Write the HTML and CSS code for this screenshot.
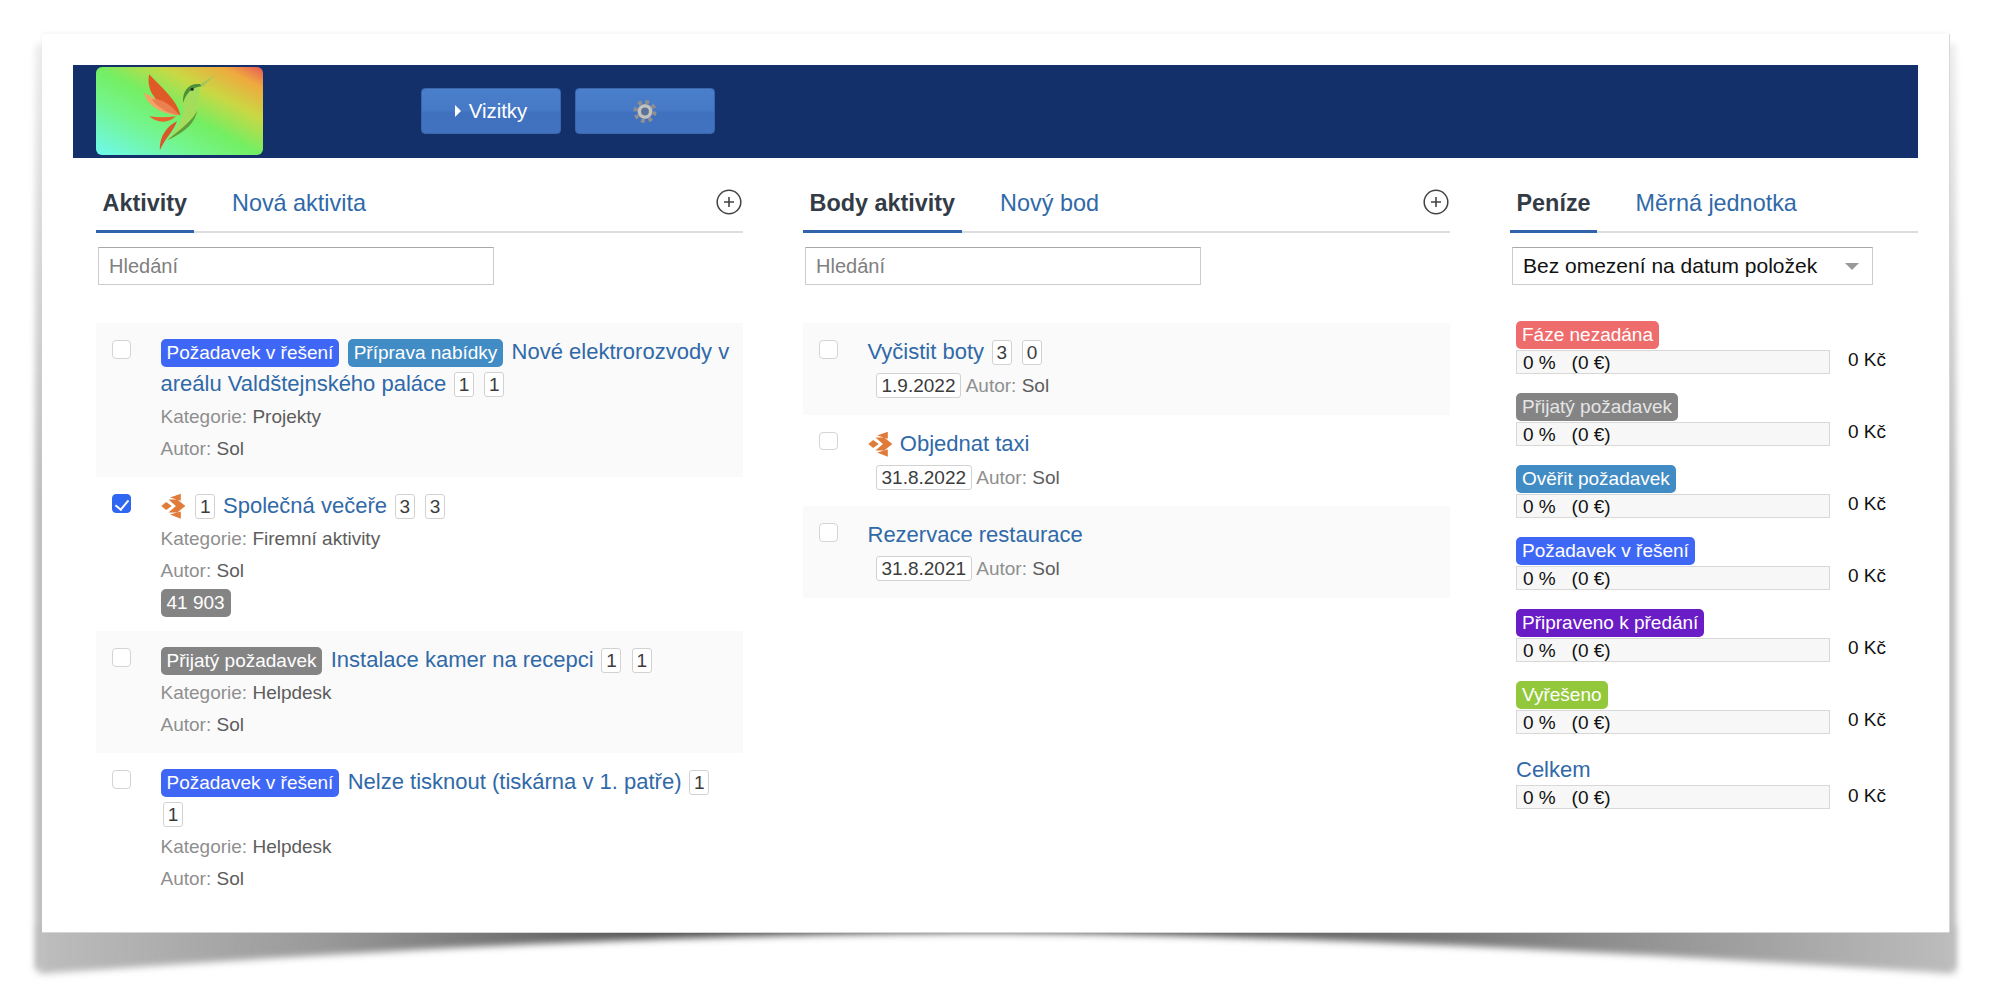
FILE: index.html
```html
<!DOCTYPE html>
<html lang="cs">
<head>
<meta charset="utf-8">
<title>Aktivity</title>
<link rel="stylesheet" href="styles.css">
</head>
<body>
<svg class="shadow" width="1994" height="996" viewBox="0 0 1994 996" aria-hidden="true">
  <defs>
    <linearGradient id="sb" x1="38" x2="1958" y1="0" y2="0" gradientUnits="userSpaceOnUse">
      <stop offset="0" stop-color="#bdbdbd"/>
      <stop offset=".15" stop-color="#999"/>
      <stop offset=".32" stop-color="#555"/>
      <stop offset=".6" stop-color="#555"/>
      <stop offset=".8" stop-color="#8a8a8a"/>
      <stop offset="1" stop-color="#bdbdbd"/>
    </linearGradient>
    <linearGradient id="ss" x1="0" x2="0" y1="34" y2="500" gradientUnits="userSpaceOnUse">
      <stop offset="0" stop-color="#eee"/>
      <stop offset="1" stop-color="#bbb"/>
    </linearGradient>
    <filter id="bl" x="-5%" y="-30%" width="110%" height="160%"><feGaussianBlur stdDeviation="4 3.5"/></filter>
    <filter id="bs" x="-100%" y="-5%" width="300%" height="110%"><feGaussianBlur stdDeviation="3"/></filter>
  </defs>
  <rect x="35" y="44" width="10" height="925" fill="url(#ss)" filter="url(#bs)"/>
  <rect x="1946" y="44" width="10" height="925" fill="url(#ss)" filter="url(#bs)"/>
  <path d="M39 925 L39 974 C 500 940 800 933 1000 933 C 1250 934 1600 950 1954 974 L1954 925 Z" fill="url(#sb)" filter="url(#bl)"/>
</svg>

<div class="window">
  <header class="topbar">
    <div class="logo">
      <svg viewBox="20 20 498 264" width="167" height="88" aria-hidden="true">
        <path d="M162 97C172 132 205 158 262 165C232 140 192 108 162 97Z" fill="#f2a468"/>
        <path d="M178 42C170 80 185 130 272 165C262 120 218 85 178 42Z" fill="#e05a28"/>
        <path d="M186 118C208 146 240 160 268 165C245 135 215 112 186 118Z" fill="#ea8050"/>
        <path d="M178 168C200 187 235 192 258 168C230 172 205 172 178 168Z" fill="#e8632e"/>
        <path d="M210 270C208 225 235 195 262 182C248 218 225 235 210 270Z" fill="#d9582a"/>
        <path d="M232 240C285 218 322 180 322 140C324 110 328 90 334 76C300 72 278 100 282 140C280 170 272 195 232 240Z" fill="#a4dc5c"/>
        <path d="M232 240C285 218 318 185 322 150C310 180 275 205 232 240Z" fill="#5f9e3c"/>
        <path d="M334 72C300 66 276 90 280 128C288 100 305 82 334 78Z" fill="#4c8f38"/>
        <path d="M330 72L376 44L338 80Z" fill="#a7c65a"/>
        <circle cx="307" cy="87" r="4.5" fill="#1d2a1d"/>
      </svg>
    </div>
    <nav class="topnav">
      <a class="navbtn"><span class="caret"></span>Vizitky</a>
      <a class="navbtn" aria-label="Nastavení">
        <svg width="24" height="25" viewBox="0 0 24 24" aria-hidden="true">
          <circle cx="12" cy="12" r="9.6" fill="none" stroke="#8f8f8f" stroke-width="4" stroke-dasharray="3.9 3.64"/>
          <circle cx="12" cy="12" r="7.6" fill="#8a8a8a"/>
          <circle cx="12" cy="12" r="5.6" fill="none" stroke="#c2c2c2" stroke-width="3.4"/>
          <circle cx="12" cy="12" r="3.7" fill="#5b7399"/>
        </svg>
      </a>
    </nav>
  </header>

  <main class="columns">
    <section class="col">
      <div class="tabs">
        <a class="tab active">Aktivity</a>
        <a class="tab">Nová aktivita</a>
        <svg class="plus" width="26" height="26" viewBox="0 0 26 26" aria-hidden="true"><circle cx="13" cy="13" r="11.8" fill="none" stroke="#444" stroke-width="1.5"/><path d="M13 8v10M8 13h10" stroke="#444" stroke-width="1.6"/></svg>
      </div>
      <input class="search" type="text" placeholder="Hledání">
      <ul class="list">
        <li class="row shaded">
          <input class="check" type="checkbox">
          <div class="body">
            <div class="line"><span class="label blue">Požadavek v řešení</span> <span class="label sky">Příprava nabídky</span> <a class="title">Nové elektrorozvody v areálu Valdštejnského paláce</a> <span class="num">1</span> <span class="num">1</span></div>
            <div class="line meta">Kategorie: <b>Projekty</b></div>
            <div class="line meta">Autor: <b>Sol</b></div>
          </div>
        </li>
        <li class="row">
          <input class="check" type="checkbox" checked>
          <div class="body">
            <div class="line"><svg class="mark" viewBox="183 48 75 80" width="25" height="26" aria-hidden="true"><path d="M210 62L243 50V72ZM205 68H232L257 88L232 108H205L228 88ZM183 88L198 76L215 88L198 100ZM210 114L243 105V127Z" fill="#e07b39"/></svg> <span class="num">1</span> <a class="title">Společná večeře</a> <span class="num">3</span> <span class="num">3</span></div>
            <div class="line meta">Kategorie: <b>Firemní aktivity</b></div>
            <div class="line meta">Autor: <b>Sol</b></div>
            <div class="line"><span class="label gray">41 903</span></div>
          </div>
        </li>
        <li class="row shaded">
          <input class="check" type="checkbox">
          <div class="body">
            <div class="line"><span class="label gray">Přijatý požadavek</span> <a class="title">Instalace kamer na recepci</a> <span class="num">1</span> <span class="num">1</span></div>
            <div class="line meta">Kategorie: <b>Helpdesk</b></div>
            <div class="line meta">Autor: <b>Sol</b></div>
          </div>
        </li>
        <li class="row">
          <input class="check" type="checkbox">
          <div class="body">
            <div class="line"><span class="label blue">Požadavek v řešení</span> <a class="title">Nelze tisknout (tiskárna v 1. patře)</a> <span class="num">1</span> <span class="num">1</span></div>
            <div class="line meta">Kategorie: <b>Helpdesk</b></div>
            <div class="line meta">Autor: <b>Sol</b></div>
          </div>
        </li>
      </ul>
    </section>

    <section class="col">
      <div class="tabs">
        <a class="tab active">Body aktivity</a>
        <a class="tab">Nový bod</a>
        <svg class="plus" width="26" height="26" viewBox="0 0 26 26" aria-hidden="true"><circle cx="13" cy="13" r="11.8" fill="none" stroke="#444" stroke-width="1.5"/><path d="M13 8v10M8 13h10" stroke="#444" stroke-width="1.6"/></svg>
      </div>
      <input class="search" type="text" placeholder="Hledání">
      <ul class="list">
        <li class="row shaded point">
          <input class="check" type="checkbox">
          <div class="body">
            <div class="pline"><a class="title">Vyčistit boty</a> <span class="num">3</span> <span class="num">0</span></div>
            <div class="pline meta indent"><span class="num date">1.9.2022</span> Autor: <b>Sol</b></div>
          </div>
        </li>
        <li class="row point">
          <input class="check" type="checkbox">
          <div class="body">
            <div class="pline"><svg class="mark" viewBox="183 48 75 80" width="25" height="26" aria-hidden="true"><path d="M210 62L243 50V72ZM205 68H232L257 88L232 108H205L228 88ZM183 88L198 76L215 88L198 100ZM210 114L243 105V127Z" fill="#e07b39"/></svg> <a class="title">Objednat taxi</a></div>
            <div class="pline meta indent"><span class="num date">31.8.2022</span> Autor: <b>Sol</b></div>
          </div>
        </li>
        <li class="row shaded point">
          <input class="check" type="checkbox">
          <div class="body">
            <div class="pline"><a class="title">Rezervace restaurace</a></div>
            <div class="pline meta indent"><span class="num date">31.8.2021</span> Autor: <b>Sol</b></div>
          </div>
        </li>
      </ul>
    </section>

    <section class="col">
      <div class="tabs">
        <a class="tab active">Peníze</a>
        <a class="tab">Měrná jednotka</a>
      </div>
      <div class="select">Bez omezení na datum položek<span class="arrow"></span></div>
      <div class="money">
        <div class="stat"><span class="label red">Fáze nezadána</span><div class="statbar"><div class="bar">0 %&nbsp;&nbsp; (0 €)</div><span class="sum">0 Kč</span></div></div>
        <div class="stat"><span class="label gray dim">Přijatý požadavek</span><div class="statbar"><div class="bar">0 %&nbsp;&nbsp; (0 €)</div><span class="sum">0 Kč</span></div></div>
        <div class="stat"><span class="label sky">Ověřit požadavek</span><div class="statbar"><div class="bar">0 %&nbsp;&nbsp; (0 €)</div><span class="sum">0 Kč</span></div></div>
        <div class="stat"><span class="label blue">Požadavek v řešení</span><div class="statbar"><div class="bar">0 %&nbsp;&nbsp; (0 €)</div><span class="sum">0 Kč</span></div></div>
        <div class="stat"><span class="label purple">Připraveno k předání</span><div class="statbar"><div class="bar">0 %&nbsp;&nbsp; (0 €)</div><span class="sum">0 Kč</span></div></div>
        <div class="stat"><span class="label green">Vyřešeno</span><div class="statbar"><div class="bar">0 %&nbsp;&nbsp; (0 €)</div><span class="sum">0 Kč</span></div></div>
        <div class="stat total"><a class="title">Celkem</a><div class="statbar"><div class="bar">0 %&nbsp;&nbsp; (0 €)</div><span class="sum">0 Kč</span></div></div>
      </div>
    </section>
  </main>
</div>
</body>
</html>
```
FILE: styles.css
```css
* { box-sizing: border-box; }
html, body { margin: 0; height: 996px; overflow: hidden; background: #fff; }
body {
  padding: 34px 45px 64px 42px;
  font-family: "Liberation Sans", Arial, sans-serif;
  color: #333;
}
.shadow { position: absolute; left: 0; top: 0; }
.window {
  position: relative;
  height: 898px;
  padding: 31px 31px 0;
  background: #fff;
  box-shadow: 0 -1px 4px rgba(0,0,0,.05), 0 1px 0 #d8d8d8, 1px 0 0 #ddd;
}
.topbar {
  display: flex;
  align-items: flex-start;
  height: 93px;
  padding: 2px 0 0 23px;
  background: #14306a;
}
.logo {
  width: 167px;
  height: 88px;
  border-radius: 6px;
  overflow: hidden;
  background: linear-gradient(to top right, #6ef9ee 0%, #74f58a 32%, #74ee62 50%, #c9d844 70%, #efa93e 88%, #e8585a 100%);
}
.logo svg { display: block; }
.topnav { display: flex; gap: 14px; margin: 21px 0 0 158px; }
.navbtn {
  display: flex;
  align-items: center;
  justify-content: center;
  width: 140px;
  height: 46px;
  border: 1px solid #3a66ab;
  border-radius: 4px;
  background: linear-gradient(#4a7fcb 0, #4679c6 50%, #3f71be 52%, #4072c0 100%);
  color: #fff;
  font-size: 20.4px;
}
.caret {
  width: 0; height: 0;
  margin-right: 8px;
  border-left: 6px solid #fff;
  border-top: 6px solid transparent;
  border-bottom: 6px solid transparent;
}
.columns {
  display: grid;
  grid-template-columns: 647px 647px 408px;
  column-gap: 60px;
  padding-left: 23px;
}
.col { min-width: 0; }
.tabs {
  display: flex;
  align-items: flex-start;
  gap: 32px;
  height: 75px;
  padding-top: 28px;
  border-bottom: 2px solid #ddd;
}
.tab {
  height: 47px;
  line-height: 34px;
  padding: 0 6.5px;
  font-size: 23.4px;
  color: #3069a8;
}
.tab.active {
  border-bottom: 3px solid #2f63aa;
  font-weight: bold;
  color: #333c46;
}
.plus { margin: 3px 1px 0 auto; }
.search {
  display: block;
  width: 396px;
  height: 38px;
  margin: 14px 0 0 2px;
  padding: 0 10px;
  border: 1px solid #ccc;
  border-top-color: #aaa;
  border-radius: 0;
  font: 20px "Liberation Sans", Arial, sans-serif;
  outline: 0;
}
.search::placeholder { color: #808080; opacity: 1; }
.list { list-style: none; margin: 38px 0 0; padding: 0; }
.row {
  display: flex;
  gap: 30px;
  padding: 14px 8px 12px 16px;
}
.row.shaded { background: #fafafa; }
.check {
  flex: none;
  position: relative;
  appearance: none;
  width: 18.5px;
  height: 18.5px;
  margin: 3px 0 0;
  border: 1px solid #d4d4d4;
  border-radius: 4px;
  background: #fff;
}
.check:checked {
  border-color: #2f66f2;
  background: #2f66f2;
}
.check:checked::after {
  content: "";
  position: absolute;
  left: 5px;
  top: 1.5px;
  width: 6px;
  height: 11px;
  border: solid #fff;
  border-width: 0 2.4px 2.4px 0;
  transform: rotate(40deg);
}
.body { flex: 1; min-width: 0; }
.line {
  line-height: 32px;
  font-size: 19px;
}
.title { font-size: 22px; line-height: 1; color: #3069a8; }
.label {
  display: inline-block;
  height: 27.5px;
  line-height: 27px;
  margin-right: 3px;
  padding: 0 6px;
  border-radius: 5px;
  font-size: 19px;
  color: #fff;
}
.blue { background: #3f67f5; }
.sky { background: #428cc6; }
.gray { background: #848484; }
.dim { color: #e4e4e4; }
.red { background: #ef6c6c; }
.purple { background: #6a1cc6; }
.green { background: #93c83c; }
.num {
  display: inline-block;
  min-width: 20px;
  height: 25px;
  margin: 0 2.5px;
  padding: 0 3px;
  line-height: 23px;
  border: 1px solid #d2d2d2;
  border-radius: 3px;
  background: #fff;
  text-align: center;
  font-size: 19px;
  color: #3c3c3c;
}
.mark { margin-right: 2px; vertical-align: -6px; }
.meta { color: #8f8f8f; }
.meta b { font-weight: normal; color: #5c5c5c; }
.row.point { padding: 13px 8px 12.5px 16px; }
.point .check { margin-top: 4px; }
.pline { height: 33px; line-height: 33px; font-size: 19px; }
.indent { padding-left: 8px; }
.num.date { margin: 0; padding: 0 5px; }
.select {
  display: flex;
  align-items: center;
  justify-content: space-between;
  width: 361px;
  height: 38px;
  margin: 14px 0 0 2px;
  padding: 0 13px 0 10px;
  border: 1px solid #ccc;
  border-top-color: #aaa;
  font-size: 21px;
  color: #111;
}
.arrow {
  width: 0; height: 0;
  border-top: 7px solid #999;
  border-left: 7px solid transparent;
  border-right: 7px solid transparent;
}
.money { margin: 36px 0 0 6px; }
.stat { height: 72px; }
.stat .label { display: table; margin: 0; }
.statbar { display: flex; align-items: center; gap: 18px; margin-top: 1px; }
.bar {
  flex: none;
  width: 314px;
  height: 24px;
  padding-left: 6px;
  line-height: 24px;
  border: 1px solid #d8d8d8;
  background: #f7f7f7;
  font-size: 19px;
  color: #111;
}
.sum { font-size: 19px; color: #111; margin-top: -3px; white-space: nowrap; }
.total { padding-top: 1px; }
.total .title { display: block; height: 32px; line-height: 32px; }
.total .statbar { margin-top: -1px; }
```
